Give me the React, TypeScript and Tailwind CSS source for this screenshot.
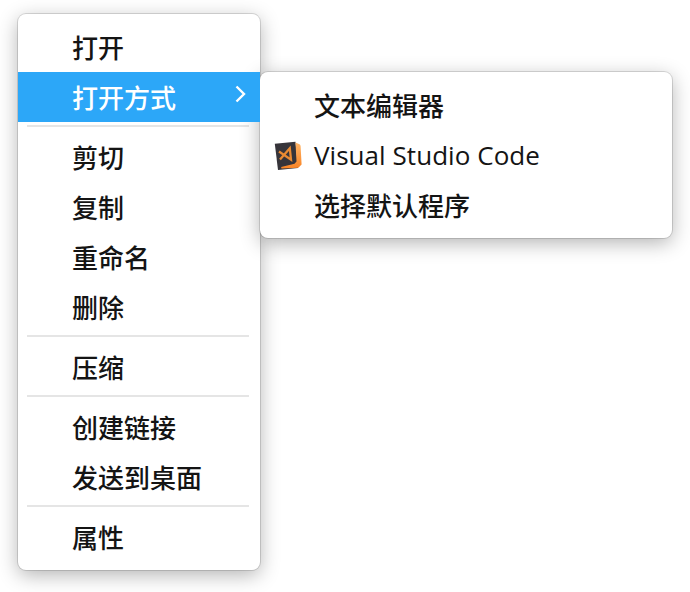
import type { ReactNode } from 'react';

function Item({ children, icon }: { children: ReactNode; icon?: ReactNode }) {
  return (
    <li className="flex h-[50px] items-center text-[26px] leading-none">
      <span className="flex w-[54px] shrink-0 pl-3.5">{icon}</span>
      {children}
    </li>
  );
}

function Label({ children }: { children: ReactNode }) {
  return (
    <span className="pt-0.5 font-medium whitespace-nowrap">{children}</span>
  );
}

function Separator() {
  return (
    <li className="flex h-2.5 items-start pt-[3px] pr-[11px] pl-[9px]">
      <span className="h-0.5 w-full bg-[#e5e5e5]" />
    </li>
  );
}

function CodeIcon() {
  return (
    <svg width="28" height="30" viewBox="0 0 28 30" className="mt-0.5">
      <defs>
        <linearGradient id="fold" x1="0" y1="0" x2="0" y2="1">
          <stop offset="0" stopColor="#ffb568" />
          <stop offset="1" stopColor="#f98425" />
        </linearGradient>
      </defs>
      <path d="M.8 2.700 21.500.800 24 27 4 29Z" fill="#36343a" />
      <path d="m21.500 1.500 4 1.800q1 .6 1.100 2L27.600 23.500l-3.200 3.300L7.500 27.600l-.4-1.700 13.400-3.200 2-2.200Z" fill="url(#fold)" />
      <path d="m5 10.500 12 8.200L15.800 7.200 6 18.500" fill="none" stroke="#e98a32" strokeWidth="2.300" />
    </svg>
  );
}

export default function App() {
  return (
    <main className="flex h-[592px] w-[690px] items-start overflow-hidden bg-white pt-3.5 pl-[18px] font-['Open_Sans','Noto_Sans_CJK_SC',sans-serif] text-[#141414]">
      <ul className="w-[242px] shrink-0 rounded-lg bg-white py-2 shadow-[0_0_0_1px_rgba(0,0,0,0.13),0_5px_20px_rgba(0,0,0,0.3)]">
        <Item><Label>打开</Label></Item>
        <li className="relative flex h-[50px] items-center bg-[#2ca7f8] pr-[13px] pl-[54px] text-[26px] leading-none text-white">
          <span className="grow pt-0.5 font-medium">打开方式</span>
          <svg width="12" height="18" viewBox="0 0 12 18" className="-mt-1.5">
            <path d="m1.500 1.500 7.500 7.500L1.500 16.500" fill="none" stroke="white" strokeWidth="2.400" />
          </svg>
        </li>
        <Separator />
        <Item><Label>剪切</Label></Item>
        <Item><Label>复制</Label></Item>
        <Item><Label>重命名</Label></Item>
        <Item><Label>删除</Label></Item>
        <Separator />
        <Item><Label>压缩</Label></Item>
        <Separator />
        <Item><Label>创建链接</Label></Item>
        <Item><Label>发送到桌面</Label></Item>
        <Separator />
        <Item><Label>属性</Label></Item>
      </ul>
      <ul className="mt-[58px] w-[412px] shrink-0 rounded-lg bg-white py-2 shadow-[0_0_0_1px_rgba(0,0,0,0.13),0_5px_20px_rgba(0,0,0,0.3)]">
        <Item><Label>文本编辑器</Label></Item>
        <Item icon={<CodeIcon />}>
          <span className="tracking-[0.05px] whitespace-nowrap">Visual Studio Code</span>
        </Item>
        <Item><Label>选择默认程序</Label></Item>
      </ul>
    </main>
  );
}
